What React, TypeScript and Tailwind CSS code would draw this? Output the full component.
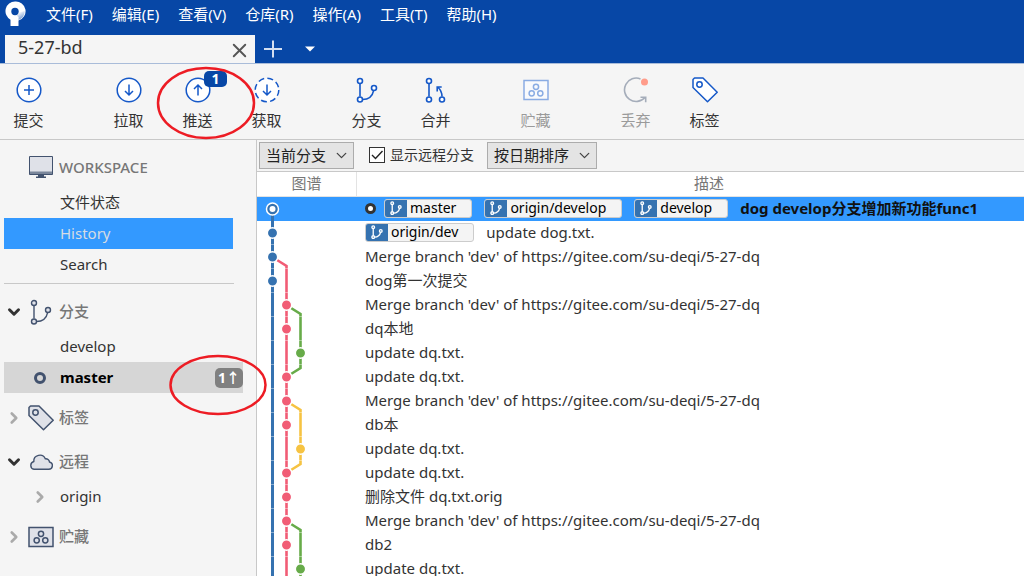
import { useState, type ReactNode } from "react";
import { ChevronDown, ChevronRight, X } from "lucide-react";
import clsx from "clsx";

const MENUS = ["文件(F)", "编辑(E)", "查看(V)", "仓库(R)", "操作(A)", "工具(T)", "帮助(H)"];

const BLUE = "#3572b0";
const PINK = "#f15c75";
const GREEN = "#67ab49";
const YELLOW = "#f6c342";

// x of each lane in the graph column
const LANES = [15.5, 29.5, 43.5];

interface Commit {
  message: string;
  refs?: string[];
  lane: number;
  // color of the third lane and how it crosses this row
  side?: { color: string; shape: "out" | "full" | "in" };
  shape?: "first" | "fork";
  // lane 1 not started yet
  single?: boolean;
}

const MERGE = "Merge branch 'dev' of https://gitee.com/su-deqi/5-27-dq";

const COMMITS: Commit[] = [
  { message: "dog develop分支增加新功能func1", refs: ["master", "origin/develop", "develop"], lane: 0, shape: "first", single: true },
  { message: "update dog.txt.", refs: ["origin/dev"], lane: 0, single: true },
  { message: MERGE, lane: 0, shape: "fork", single: true },
  { message: "dog第一次提交", lane: 0 },
  { message: MERGE, lane: 1, side: { color: GREEN, shape: "out" } },
  { message: "dq本地", lane: 1, side: { color: GREEN, shape: "full" } },
  { message: "update dq.txt.", lane: 2, side: { color: GREEN, shape: "full" } },
  { message: "update dq.txt.", lane: 1, side: { color: GREEN, shape: "in" } },
  { message: MERGE, lane: 1, side: { color: YELLOW, shape: "out" } },
  { message: "db本", lane: 1, side: { color: YELLOW, shape: "full" } },
  { message: "update dq.txt.", lane: 2, side: { color: YELLOW, shape: "full" } },
  { message: "update dq.txt.", lane: 1, side: { color: YELLOW, shape: "in" } },
  { message: "删除文件 dq.txt.orig", lane: 1 },
  { message: MERGE, lane: 1, side: { color: GREEN, shape: "out" } },
  { message: "db2", lane: 1, side: { color: GREEN, shape: "full" } },
  { message: "update dq.txt.", lane: 2, side: { color: GREEN, shape: "full" } },
];

const SIDE_PATHS = {
  out: "M34 15L43.5 21V24",
  full: "M43.5 0V24",
  in: "M43.5 0V3L34 9",
};

function Logo() {
  return (
    <svg width="22" height="26" viewBox="0 0 22 26" className="shrink-0">
      <defs>
        <linearGradient id="logo" x1="0.3" y1="0" x2="0.8" y2="1">
          <stop offset="0.1" stopColor="#fff" />
          <stop offset="1" stopColor="#5d88c8" />
        </linearGradient>
      </defs>
      <path d="M11 1.500a9.700 9.700 0 0 0-4.500 18.200V25.500q0 1 1 1h6q1 0 1-1V20.500A9.700 9.700 0 0 0 11 1.500z" fill="#fff" />
      <path d="M14.500 12.500L20.700 11a9.700 9.700 0 0 1-6.200 9V17l-2-1.500z" fill="url(#logo)" />
      <circle cx="11" cy="11.500" r="3.700" fill="#0747a6" />
    </svg>
  );
}

function BranchIcon({ size, stroke, fill = "none", width = 1.6 }: { size: number; stroke: string; fill?: string; width?: number }) {
  return (
    <svg width={size} height={size} viewBox="0 0 26 26" fill="none" stroke={stroke} strokeWidth={width}>
      <path d="M6 6.500v13M8.500 22.500c6 0 10-3.500 11.200-9.200" />
      <circle cx="6" cy="4" r="2.500" fill={fill} />
      <circle cx="6" cy="22.500" r="2.500" fill={fill} />
      <circle cx="20" cy="11" r="2.500" fill={fill} />
    </svg>
  );
}

function CircleIcon({ d, dashed }: { d: string; dashed?: boolean }) {
  return (
    <svg width="26" height="26" viewBox="0 0 26 26" fill="none" stroke="#1558c8" strokeWidth="1.5">
      <circle cx="13" cy="13" r="11.800" fill="#fff" strokeDasharray={dashed ? "6 3.270" : undefined} />
      <path d={d} />
    </svg>
  );
}

function MergeIcon() {
  return (
    <svg width="26" height="26" viewBox="0 0 26 26" fill="none" stroke="#1558c8" strokeWidth="1.600">
      <path d="M6 6.500v13M19 19.500c0-4-1.500-7-4.500-9.500M14.200 14.500V10h4.500" />
      <circle cx="6" cy="4" r="2.500" fill="#fff" />
      <circle cx="6" cy="22.500" r="2.500" fill="#fff" />
      <circle cx="19" cy="22.500" r="2.500" fill="#fff" />
    </svg>
  );
}

function StashIcon({ stroke, fill }: { stroke: string; fill: string }) {
  return (
    <svg width="26" height="26" viewBox="0 0 26 26" fill={fill} stroke={stroke} strokeWidth="1.500">
      <path d="M1 3.500h24v19H1z" />
      <circle cx="13" cy="9.800" r="2.600" />
      <circle cx="8.700" cy="16.300" r="2.600" />
      <circle cx="17.300" cy="16.300" r="2.600" />
    </svg>
  );
}

function DiscardIcon() {
  return (
    <svg width="26" height="26" viewBox="0 0 26 26" fill="none" stroke="#a5adba" strokeWidth="1.600">
      <path d="M17.500 1.900A11.700 11.700 0 1 0 22 20.500M17.500 20.300h5.200v5" />
      <circle cx="21.500" cy="5" r="3.500" fill="#ff9c8a" stroke="none" />
    </svg>
  );
}

function TagIcon({ stroke, fill }: { stroke: string; fill: string }) {
  return (
    <svg width="26" height="26" viewBox="0 0 26 26" fill={fill} stroke={stroke} strokeWidth="1.500" strokeLinejoin="round">
      <path d="M1 2.500L2.500 1h8.500L25.200 15.200 15.500 24.800 1 10.500z" />
      <circle cx="7.500" cy="7.500" r="2.700" />
    </svg>
  );
}

function MonitorIcon() {
  return (
    <svg width="26" height="26" viewBox="0 0 26 26">
      <path d="M1.500 1.500h23v18h-23z" fill="#dfe1e8" />
      <path d="M1.500 16.500h23v3h-23z" fill="#7a869a" />
      <path d="M1.500 1.500h23v18h-23z" fill="none" stroke="#42526e" />
      <path d="M10 20h6v1.500h2V23H8v-1.500h2z" fill="#42526e" />
    </svg>
  );
}

function CloudIcon() {
  return (
    <svg width="26" height="26" viewBox="0 0 26 26" fill="#dfe1e8" stroke="#42526e" strokeWidth="1.400">
      <path d="M6 20.300h14.500a3.700 3.700 0 0 0 1-7.300 3.600 3.600 0 0 0-4.200-3.200 6 6 0 0 0-11.500 2.700A4 4 0 0 0 6 20.300z" />
    </svg>
  );
}

function ToolButton({ label, icon, badge, disabled }: { label: string; icon: ReactNode; badge?: number; disabled?: boolean }) {
  return (
    <button disabled={disabled} className={clsx("relative flex w-[57px] flex-col items-center gap-[7px]", disabled ? "text-[#9a9a9a]" : "text-[#333]")}>
      {icon}
      <span className="leading-5">{label}</span>
      {badge && (
        <span className="absolute -top-1.5 left-[35px] h-4 w-[23px] rounded-[5px] bg-[#0747a6] text-sm leading-4 font-bold text-white">
          {badge}
        </span>
      )}
    </button>
  );
}

function Section({ title, icon, open, children }: { title: string; icon: ReactNode; open?: boolean; children?: ReactNode }) {
  return (
    <section>
      <h2 className="flex h-8 items-center pl-[5px] font-medium text-[#777]">
        <span className="w-[23px]">
          {open === true && <ChevronDown size={18} strokeWidth={4} className="text-[#333]" />}
          {open === false && <ChevronRight size={18} strokeWidth={3.5} className="text-[#aaa]" />}
        </span>
        {icon}
        <span className="pb-0.5 pl-[5px]">{title}</span>
      </h2>
      <ul className="pt-[3px]">{children}</ul>
    </section>
  );
}

function SidebarItem({ label, marker, badge, className }: { label: string; marker?: ReactNode; badge?: string; className?: string }) {
  return (
    <li className={clsx("ml-1 flex h-[31px] items-center", className)}>
      <span className="flex w-14 justify-center pl-4">{marker}</span>
      <a href="#" className="flex-1">{label}</a>
      {badge && <span className="rounded-[5px] bg-[#808080] px-[3px] text-sm leading-5 font-bold text-white">{badge}</span>}
    </li>
  );
}

function Dropdown({ label, options, className }: { label: string; options: string[]; className: string }) {
  return (
    <div className={clsx("relative", className)}>
      <select aria-label={label} className="h-[27px] w-full appearance-none border border-[#acacac] bg-[#e4e4e4] pl-1.5 text-[#222]">
        {options.map((o) => (
          <option key={o}>{o}</option>
        ))}
      </select>
      <ChevronDown size={17} strokeWidth={1.8} className="pointer-events-none absolute top-[5px] right-1 text-[#444]" />
    </div>
  );
}

function GraphCell({ commit }: { commit: Commit }) {
  const { lane, side, shape, single } = commit;
  const color = lane === 0 ? BLUE : lane === 1 ? PINK : side?.color;
  const first = shape === "first";
  return (
    <svg width="99" height="24" viewBox="0 0 99 24" fill="none" strokeWidth="2.600" className="block">
      <path d={first ? "M15.500 12V24" : "M15.500 0V24"} stroke={BLUE} strokeWidth="3" />
      {!single && <path d="M29.500 0V24" stroke={PINK} />}
      {shape === "fork" && <path d="M20 15L29.500 21V24" stroke={PINK} />}
      {side && <path d={SIDE_PATHS[side.shape]} stroke={side.color} />}
      {!first && <path d="M0 23.500H60" stroke="#fff" strokeWidth="1" opacity="0.4" />}
      {first ? (
        <>
          <circle cx="15.500" cy="12" r="6" fill={BLUE} stroke="#fff" strokeWidth="1.500" />
          <circle cx="15.500" cy="12" r="3" fill="#fff" />
        </>
      ) : (
        <circle cx={LANES[lane]} cy="12" r="5.200" fill={color} stroke="#fff" strokeWidth="1.500" />
      )}
    </svg>
  );
}

function RefChip({ name }: { name: string }) {
  return (
    <span className="flex h-[19px] overflow-hidden rounded-[3px] border border-[#ccc] bg-[#f4f4f4] pr-[15px] text-sm font-normal text-black">
      <span className="mr-[3px] flex w-[22px] items-center justify-center bg-[#3572b0]">
        <BranchIcon size={14} stroke="#fff" width={2.5} />
      </span>
      <span className="leading-4">{name}</span>
    </span>
  );
}

export default function App() {
  const [showRemote, setShowRemote] = useState(true);

  return (
    <div className="relative flex h-screen flex-col overflow-hidden bg-[#f5f5f5] font-['Noto_Sans','Noto_Sans_CJK_SC',sans-serif] text-[15px] text-[#333]">
      <header className="border-b border-[#a9bcd9] bg-[#0747a6]">
        <nav className="flex h-[35px] items-start pl-1 text-white">
          <Logo />
          <div className="ml-5 flex gap-[19px] pt-[3px]">
            {MENUS.map((m) => (
              <button key={m} className="leading-[22px]">{m}</button>
            ))}
          </div>
        </nav>
        <div className="flex h-7 items-center pl-[5px]">
          <div className="flex h-full w-[250px] justify-between bg-[#f5f5f5] pr-1 pl-[13px]">
            <span className="text-lg leading-6">5-27-bd</span>
            <button aria-label="关闭" className="pt-0.5">
              <X size={23} strokeWidth={2} className="text-[#555]" />
            </button>
          </div>
          <button aria-label="新建标签页" className="ml-[9px]">
            <svg width="18" height="18" viewBox="0 0 18 18" stroke="#d3def0" strokeWidth="2">
              <path d="M9 0.500v17M0 9h18" />
            </svg>
          </button>
          <button aria-label="更多" className="ml-[23px]">
            <svg width="10" height="6" viewBox="0 0 10 6" fill="#fff">
              <path d="M0 0.500h10L5 5.500z" />
            </svg>
          </button>
        </div>
      </header>

      <div className="flex h-[76px] shrink-0 items-start gap-[43px] border-b border-[#c8c8c8] pt-[13px]">
        <ToolButton label="提交" icon={<CircleIcon d="M13 8v10M8 13h10" />} />
        <div className="flex gap-3">
          <ToolButton label="拉取" icon={<CircleIcon d="M13 7.500v10.500M9 14l4 4 4-4" />} />
          <ToolButton label="推送" icon={<CircleIcon d="M13 18.500V8M9 12l4-4 4 4" />} badge={1} />
          <ToolButton label="获取" icon={<CircleIcon d="M13 7.500v10.500M9 14l4 4 4-4" dashed />} />
        </div>
        <div className="flex gap-3">
          <ToolButton label="分支" icon={<BranchIcon size={26} stroke="#1558c8" fill="#fff" />} />
          <ToolButton label="合并" icon={<MergeIcon />} />
        </div>
        <ToolButton label="贮藏" icon={<StashIcon stroke="#8aace3" fill="#f9fafc" />} disabled />
        <div className="flex gap-3">
          <ToolButton label="丢弃" icon={<DiscardIcon />} disabled />
          <ToolButton label="标签" icon={<TagIcon stroke="#1558c8" fill="#fff" />} />
        </div>
      </div>

      <div className="flex min-h-0 flex-1">
        <aside className="flex w-[257px] shrink-0 flex-col gap-[9px] border-r border-[#c8c8c8] pt-3">
          <div>
            <Section title="WORKSPACE" icon={<MonitorIcon />}>
              <SidebarItem label="文件状态" />
              <SidebarItem label="History" className="mr-[23px] bg-[#3399ff] text-[#d6dce4]" />
              <SidebarItem label="Search" />
            </Section>
            <hr className="mt-[3px] mr-[22px] mb-[3px] ml-1 border-[#c8c8c8]" />
          </div>
          <Section title="分支" icon={<BranchIcon size={26} stroke="#42526e" fill="#dfe1e8" width={1.4} />} open>
            <SidebarItem label="develop" />
            <SidebarItem
              label="master"
              className="mr-[13px] bg-[#d6d6d6] font-bold text-black"
              marker={<span className="size-3 rounded-full border-3 border-[#42526e]" />}
              badge="1↑"
            />
          </Section>
          <Section title="标签" icon={<TagIcon stroke="#42526e" fill="#dfe1e8" />} open={false} />
          <Section title="远程" icon={<CloudIcon />} open>
            <SidebarItem label="origin" marker={<ChevronRight size={18} strokeWidth={3.5} className="text-[#aaa]" />} />
          </Section>
          <Section title="贮藏" icon={<StashIcon stroke="#42526e" fill="#dfe1e8" />} open={false} />
        </aside>

        <main className="min-w-0 flex-1 overflow-hidden bg-white">
          <div className="flex h-8 items-center border-b border-[#c8c8c8] bg-[#f5f5f5] pb-px pl-0.5">
            <Dropdown label="分支筛选" options={["当前分支", "所有分支"]} className="w-[95px]" />
            <label className="ml-[15px] flex items-center gap-[5px] text-sm">
              <span className="relative flex">
                <input
                  type="checkbox"
                  checked={showRemote}
                  onChange={(e) => setShowRemote(e.target.checked)}
                  className="size-4 appearance-none border border-[#333] bg-white"
                />
                {showRemote && (
                  <svg width="16" height="16" viewBox="0 0 16 16" fill="none" stroke="#222" strokeWidth="1.400" className="pointer-events-none absolute inset-0">
                    <path d="M3 8l3.500 3.500L13.500 4" />
                  </svg>
                )}
              </span>
              显示远程分支
            </label>
            <Dropdown label="排序方式" options={["按日期排序", "按祖先排序"]} className="ml-[13px] w-[110px]" />
          </div>

          <table className="w-full table-fixed border-separate border-spacing-0 whitespace-nowrap">
            <thead>
              <tr className="text-[#777]">
                <th className="h-[25px] w-[100px] border-r border-b border-[#e3e3e3] p-0 pb-0.5 leading-[22px] font-normal">图谱</th>
                <th className="h-[25px] border-b border-[#e3e3e3] p-0 pb-0.5 pl-[37px] leading-[22px] font-normal">描述</th>
              </tr>
            </thead>
            <tbody>
              {COMMITS.map((c, i) => (
                <tr key={i} className={clsx("h-6", i === 0 && "bg-[#3399ff] font-bold text-[#111]")}>
                  <td className="p-0">
                    <GraphCell commit={c} />
                  </td>
                  <td className="p-0 pl-2">
                    <div className="flex h-6 items-center gap-3 pb-0.5">
                      {i === 0 && <span className="-mr-1 size-[11px] rounded-full border-3 border-[#333] bg-white" />}
                      {c.refs?.map((r) => <RefChip key={r} name={r} />)}
                      <span className="leading-[22px]">{c.message}</span>
                    </div>
                  </td>
                </tr>
              ))}
            </tbody>
          </table>
        </main>
      </div>

      {/* red hand-drawn marks around the push button and the ahead badge */}
      <svg width="280" height="430" className="pointer-events-none absolute top-0 left-0" fill="none" stroke="#ed1c24" strokeWidth="2.500">
        <ellipse cx="206" cy="103" rx="48" ry="35" />
        <ellipse cx="218" cy="385" rx="47.500" ry="29" />
      </svg>
    </div>
  );
}
